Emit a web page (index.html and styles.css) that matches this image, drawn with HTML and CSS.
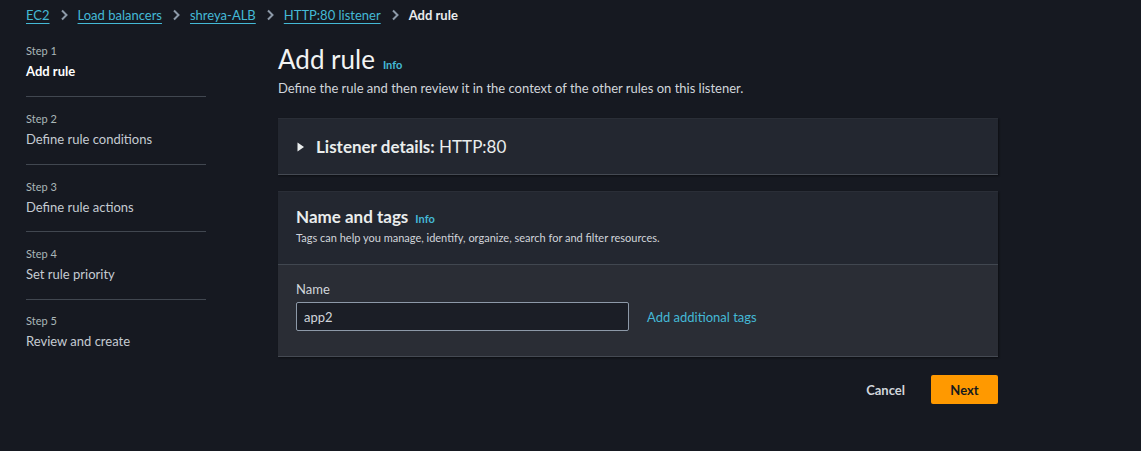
FILE: index.html
```html
<!DOCTYPE html>
<html>
<head>
<meta charset="utf-8">
<link rel="stylesheet" href="styles.css">
</head>
<body>
<nav class="crumbs">
  <a href="#">EC2</a><span class="chev"><svg width="10" height="12" viewBox="0 0 10 12"><path d="M3 1.5 L7.5 6 L3 10.5" fill="none" stroke="#8d99a8" stroke-width="2"/></svg></span>
  <a href="#">Load balancers</a><span class="chev"><svg width="10" height="12" viewBox="0 0 10 12"><path d="M3 1.5 L7.5 6 L3 10.5" fill="none" stroke="#8d99a8" stroke-width="2"/></svg></span>
  <a href="#">shreya-ALB</a><span class="chev"><svg width="10" height="12" viewBox="0 0 10 12"><path d="M3 1.5 L7.5 6 L3 10.5" fill="none" stroke="#8d99a8" stroke-width="2"/></svg></span>
  <a href="#">HTTP:80 listener</a><span class="chev"><svg width="10" height="12" viewBox="0 0 10 12"><path d="M3 1.5 L7.5 6 L3 10.5" fill="none" stroke="#8d99a8" stroke-width="2"/></svg></span>
  <span class="current">Add rule</span>
</nav>
<div class="layout">
  <aside class="steps">
    <div class="step first"><div class="step-num">Step 1</div><div class="step-name active">Add rule</div></div>
    <div class="step"><div class="step-num">Step 2</div><div class="step-name">Define rule conditions</div></div>
    <div class="step short"><div class="step-num">Step 3</div><div class="step-name">Define rule actions</div></div>
    <div class="step"><div class="step-num">Step 4</div><div class="step-name">Set rule priority</div></div>
    <div class="step last"><div class="step-num">Step 5</div><div class="step-name">Review and create</div></div>
  </aside>
  <main class="main">
    <h1 class="title"><span>Add rule</span><a class="info" href="#">Info</a></h1>
    <p class="desc">Define the rule and then review it in the context of the other rules on this listener.</p>
    <section class="card listener">
      <svg class="caret" width="8" height="10" viewBox="0 0 8 10"><path d="M0.5 0.5 L7 5 L0.5 9.5 Z" fill="#eaeded"/></svg>
      <span class="listener-title"><b>Listener details:</b> HTTP:80</span>
    </section>
    <section class="card tags">
      <header class="tags-head">
        <h2 class="tags-title"><span>Name and tags</span><a class="info" href="#">Info</a></h2>
        <p class="tags-sub">Tags can help you manage, identify, organize, search for and filter resources.</p>
      </header>
      <div class="tags-body">
        <label class="field-label">Name</label>
        <div class="field-row">
          <input class="field-input" type="text" value="app2">
          <a class="add-tags" href="#">Add additional tags</a>
        </div>
      </div>
    </section>
    <div class="actions">
      <button class="btn-cancel">Cancel</button>
      <button class="btn-next">Next</button>
    </div>
  </main>
</div>
</body>
</html>
```
FILE: styles.css
```css
* { box-sizing: border-box; }
html, body { margin: 0; padding: 0; }
body {
  background: #161921;
  color: #d1d5db;
  font-family: "Lato", "Noto Sans", sans-serif;
  font-size: 13px;
  width: 1141px;
  height: 451px;
  overflow: hidden;
}
a { color: #44b9d6; text-decoration: none; }
.crumbs {
  display: flex;
  align-items: center;
  padding: 0 0 0 26px;
  height: 30px;
  font-size: 13px;
}
.crumbs a { text-decoration: underline; text-underline-offset: 3px; }
.chev { display: inline-flex; margin: 0 9px 0 9px; }
.current { color: #e9ebed; font-weight: 700; }
.layout { display: flex; padding-top: 12px; }
.steps { width: 180px; margin-left: 26px; }
.step { border-bottom: 1px solid #414750; padding: 14px 0 15px; height: 68px; }
.step.first { padding-top: 1px; height: 55px; }
.step.short { height: 67px; }
.step.last { border-bottom: none; padding-top: 13px; }
.step-num { font-size: 11px; color: #aab7b8; line-height: 16px; }
.step-name { font-size: 13px; color: #c5cbd2; line-height: 20px; margin-top: 2px; }
.step-name.active { color: #ffffff; font-weight: 700; }
.main { margin-left: 72px; width: 720px; }
.title {
  display: flex; align-items: baseline;
  margin: 0; font-size: 26px; font-weight: 400; color: #f2f3f3; line-height: 32px; margin-top: 1px;
}
.title .info, .tags-title .info { font-size: 11px; font-weight: 700; margin-left: 8px; line-height: 14px; }
.tags-title .info { margin-left: 7px; }
.desc { margin: 4px 0 0; color: #d1d5db; font-size: 13px; line-height: 18px; }
.card {
  background: #232730;
  border-top: 1px solid #2a2e37;
  border-bottom: 1px solid #454a53;
  box-shadow: 1px 1px 2px rgba(0,0,0,0.45);
}
.listener {
  margin-top: 21px;
  height: 57px;
  display: flex;
  align-items: center;
  padding-left: 19px;
}
.caret { margin-right: 11px; }
.listener-title { font-size: 17px; color: #eaeded; }
.listener-title b { font-weight: 700; }
.tags { margin-top: 16px; }
.tags-head { padding: 14px 18px 14px; border-bottom: 1px solid #414750; height: 73px; }
.tags-title { display: flex; align-items: baseline; margin: 0; font-size: 17px; font-weight: 700; color: #eaeded; line-height: 22px; }
.tags-sub { margin: 3px 0 0; font-size: 11px; color: #d1d5db; line-height: 14px; }
.tags-body { background: #2a2d35; padding: 15px 18px 25px; }
.field-label { display: block; color: #d1d5db; font-size: 13px; line-height: 18px; margin-bottom: 4px; }
.field-row { display: flex; align-items: center; }
.field-input {
  width: 333px; height: 29px;
  background: #1b1e26; border: 1px solid #8d99a8; border-radius: 2px;
  color: #d1d5db; font-family: inherit; font-size: 13px; padding: 0 7px;
}
.add-tags { margin-left: 18px; font-size: 13px; }
.actions { display: flex; justify-content: flex-end; align-items: center; margin-top: 18px; }
.btn-cancel {
  background: none; border: none; color: #d1d5db; font-family: inherit; font-weight: 700;
  font-size: 13px; padding: 0 20px; height: 29px; margin-right: 6px;
}
.btn-next {
  background: #ff9900; border: none; border-radius: 2px; color: #16191f; font-family: inherit;
  font-weight: 700; font-size: 13px; width: 67px; height: 29px;
}
```
